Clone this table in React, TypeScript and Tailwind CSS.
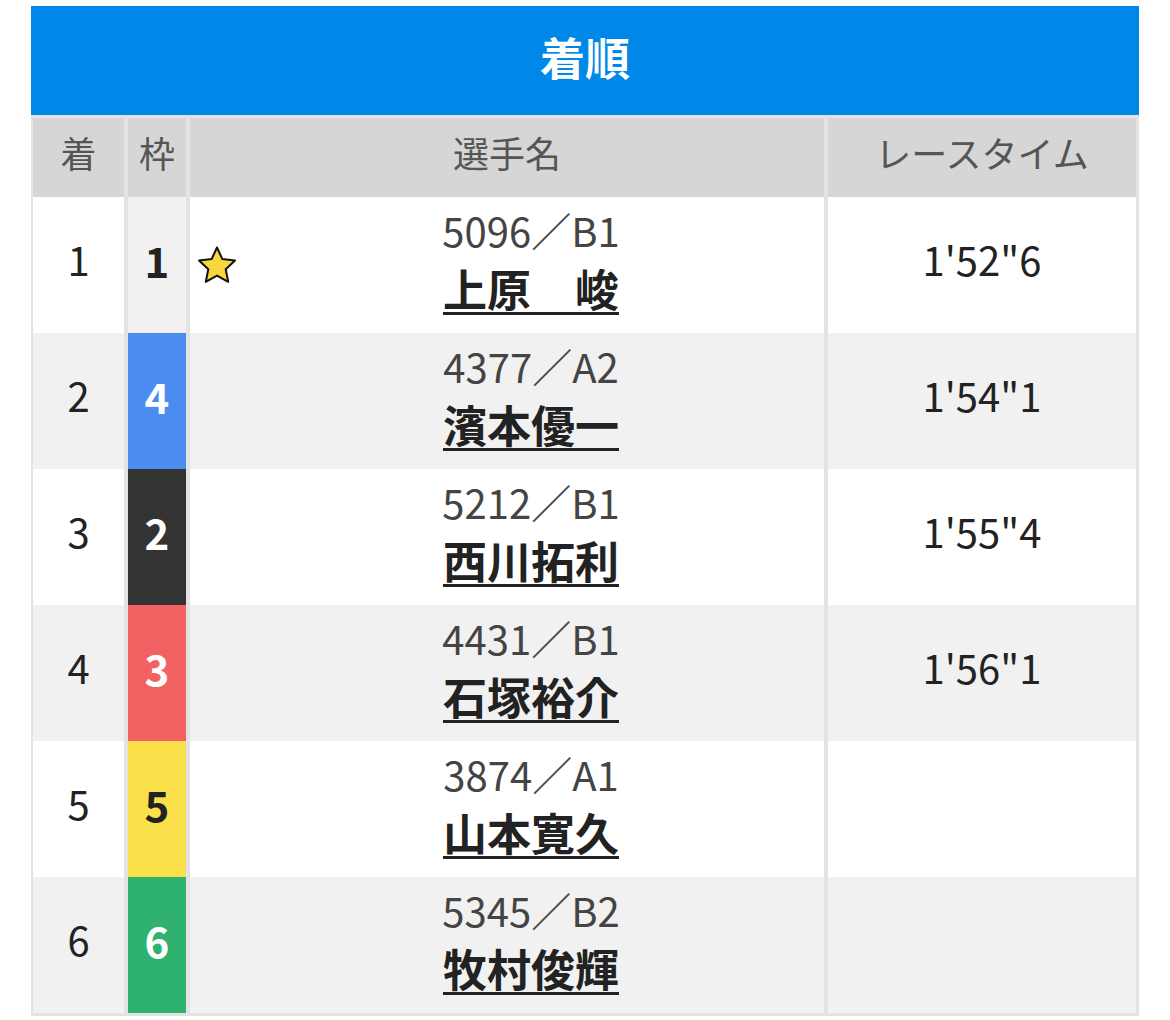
const font = { fontFamily: '"Noto Sans CJK JP", "Noto Sans", sans-serif' };

type Row = {
    rank: number;
    frame: number;
    reg: string;
    name: string;
    time: string;
    star?: boolean;
};

const rows: Row[] = [
    { rank: 1, frame: 1, reg: "5096／B1", name: "上原　峻", time: "1'52\"6", star: true },
    { rank: 2, frame: 4, reg: "4377／A2", name: "濱本優一", time: "1'54\"1" },
    { rank: 3, frame: 2, reg: "5212／B1", name: "西川拓利", time: "1'55\"4" },
    { rank: 4, frame: 3, reg: "4431／B1", name: "石塚裕介", time: "1'56\"1" },
    { rank: 5, frame: 5, reg: "3874／A1", name: "山本寛久", time: "" },
    { rank: 6, frame: 6, reg: "5345／B2", name: "牧村俊輝", time: "" },
];

const frameColors: Record<number, string> = {
    1: "bg-[#f1f1f1] text-[#222]",
    2: "bg-[#333333] text-white",
    3: "bg-[#f26262] text-white",
    4: "bg-[#4a8cf0] text-white",
    5: "bg-[#fae04b] text-[#222]",
    6: "bg-[#2fb16f] text-white",
};

function Star() {
    return (
        <svg viewBox="0 0 40 38" className="w-[40px] h-[38px]">
            <path
                d="M20 1.5l5.4 11.6 12.6 1.5-9.3 8.7 2.5 12.5L20 29.6 8.8 35.8l2.5-12.5L2 14.6l12.6-1.5z"
                fill="#f7d73e"
                stroke="#111"
                strokeWidth="2"
                strokeLinejoin="round"
            />
        </svg>
    );
}

export default function App() {
    return (
        <div className="bg-white min-h-[1020px] pt-[6px] pl-[31px]" style={font}>
            <div className="w-[1108px]">
                <div className="h-[109px] bg-[#0088e8] flex items-center justify-center pb-[8px]">
                    <span className="text-white font-bold text-[45px] leading-none">着順</span>
                </div>

                <div className="grid grid-cols-[91px_58px_634px_308px] gap-x-[4px] bg-[#e3e3e3] border-t-[3px] border-b-[3px] border-l-[2px] border-r-[3px] border-[#e3e3e3]">
                    {["着", "枠", "選手名", "レースタイム"].map((h) => (
                        <div key={h} className="h-[79px] bg-[#d6d6d6] flex items-center justify-center pb-[12px] text-[36px] text-[#555]">
                            {h}
                        </div>
                    ))}

                    {rows.map((r, i) => {
                        const bg = i % 2 === 0 ? "bg-white" : "bg-[#f1f1f1]";
                        return (
                            <div key={r.rank} className="contents">
                                <div className={`${bg} h-[136px] flex items-center justify-center pb-[12px] text-[40px] text-[#222]`}>
                                    {r.rank}
                                </div>
                                <div className={`${frameColors[r.frame]} h-[136px] flex items-center justify-center pb-[12px] text-[42px] font-bold`}>
                                    {r.frame}
                                </div>
                                <div className={`${bg} h-[136px] flex items-center`}>
                                    <div className="w-[50px] pl-[7px] flex items-center">
                                        {r.star && <Star />}
                                    </div>
                                    <div className="flex-1 flex flex-col items-center leading-[58px] pb-[12px] pr-[2px]">
                                        <span className="text-[40px] text-[#444]">{r.reg}</span>
                                        <span className="text-[44px] font-bold text-[#222] underline decoration-[3px] underline-offset-[5px]">
                                            {r.name}
                                        </span>
                                    </div>
                                </div>
                                <div className={`${bg} h-[136px] flex items-center justify-center pb-[12px] text-[40px] text-[#222]`}>
                                    {r.time}
                                </div>
                            </div>
                        );
                    })}
                </div>
            </div>
        </div>
    );
}
